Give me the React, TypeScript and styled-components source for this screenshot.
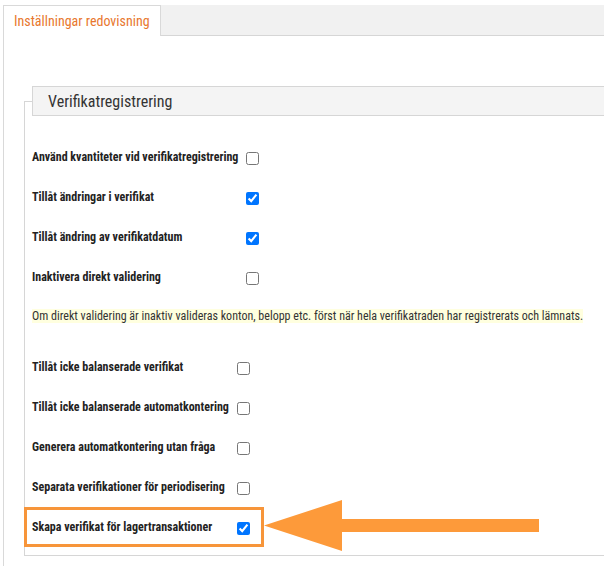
import styled, { createGlobalStyle } from "styled-components";

const GlobalStyle = createGlobalStyle`
  html, body {
    margin: 0;
    padding: 0;
    background: #fff;
    overflow: hidden;
  }
  body {
    font-family: "Roboto Condensed", Roboto, "Liberation Sans", sans-serif;
    font-stretch: 75%;
    color: #333;
  }
`;

const Page = styled.div`
  width: 604px;
  height: 566px;
  padding: 5px 0 0 3px;
  box-sizing: border-box;
  overflow: hidden;
  display: flex;
  flex-direction: column;
`;

const TabBar = styled.div`
  display: flex;
  height: 30px;
  flex-shrink: 0;
  background: #f1f1f1;
  border-bottom: 1px solid #d6d6d6;
`;

const Tab = styled.div`
  display: flex;
  align-items: center;
  padding: 0 10px 0 10px;
  background: #fff;
  border: 1px solid #d9d9d9;
  border-bottom: none;
  margin-bottom: -1px;
  font-size: 14px;
  color: #e8772e;
`;

const Panel = styled.div`
  flex: 1;
  min-height: 0;
  overflow: hidden;
  border-left: 1px solid #d9d9d9;
  padding: 50px 0 0 20px;
`;

const Fieldset = styled.fieldset`
  position: relative;
  margin: 0 -40px 0 0;
  padding: 0 7px 7px 7px;
  border: 1px solid #d6d6d6;
  border-right: none;
  min-width: 0;
`;

const Legend = styled.legend`
  box-sizing: border-box;
  width: 100%;
  height: 30px;
  padding: 0 0 0 15px;
  display: flex;
  align-items: center;
  background: #f4f4f4;
  border: 1px solid #d6d6d6;
  border-right: none;
  font-size: 16px;
  color: #333;
`;

const Group = styled.div<{ $top: number }>`
  display: grid;
  grid-template-columns: max-content max-content;
  column-gap: 8px;
  margin-top: ${({ $top }) => $top}px;
`;

const Label = styled.div`
  height: 40px;
  display: flex;
  align-items: center;
  padding-bottom: 3px;
  box-sizing: border-box;
  font-size: 12px;
  font-weight: 700;
  color: #222;
`;

const BoxCell = styled.div`
  height: 40px;
  display: flex;
  align-items: center;
`;

const Check = styled.input`
  width: 13px;
  height: 13px;
  margin: 0;
`;

const Note = styled.div`
  height: 36px;
  display: flex;
  align-items: center;
  font-size: 12px;
  color: #333;

  span {
    background: #ffffdf;
  }
`;

const Highlight = styled.div`
  position: absolute;
  left: -1px;
  bottom: 8px;
  width: 240px;
  height: 40px;
  box-sizing: border-box;
  border: 3px solid #f7953a;
  pointer-events: none;
`;

const Arrow = styled.svg`
  position: absolute;
  left: 239px;
  bottom: 3px;
`;

const first = [
  { label: "Använd kvantiteter vid verifikatregistrering", on: false },
  { label: "Tillåt ändringar i verifikat", on: true },
  { label: "Tillåt ändring av verifikatdatum", on: true },
  { label: "Inaktivera direkt validering", on: false },
];

const second = [
  { label: "Tillåt icke balanserade verifikat", on: false },
  { label: "Tillåt icke balanserade automatkontering", on: false },
  { label: "Generera automatkontering utan fråga", on: false },
  { label: "Separata verifikationer för periodisering", on: false },
  { label: "Skapa verifikat för lagertransaktioner", on: true },
];

type Row = { label: string; on: boolean };

const Rows = ({ rows, top }: { rows: Row[]; top: number }) => (
  <Group $top={top}>
    {rows.flatMap((r) => [
      <Label key={r.label}>{r.label}</Label>,
      <BoxCell key={r.label + "-box"}>
        <Check type="checkbox" defaultChecked={r.on} />
      </BoxCell>,
    ])}
  </Group>
);

export default function App() {
  return (
    <>
      <GlobalStyle />
      <Page>
        <TabBar>
          <Tab>Inställningar redovisning</Tab>
        </TabBar>
        <Panel>
          <Fieldset>
            <Legend>Verifikatregistrering</Legend>
            <Rows rows={first} top={22} />
            <Note>
              <span>
                Om direkt validering är inaktiv valideras konton, belopp etc. först när hela
                verifikatraden har registrerats och lämnats.
              </span>
            </Note>
            <Rows rows={second} top={14} />
            <Highlight />
            <Arrow width="278" height="52" viewBox="0 0 278 52">
              <polygon
                points="0,25.5 78,0 78,19 275,19 275,32 78,32 78,51"
                fill="#fd9a3a"
              />
            </Arrow>
          </Fieldset>
        </Panel>
      </Page>
    </>
  );
}
